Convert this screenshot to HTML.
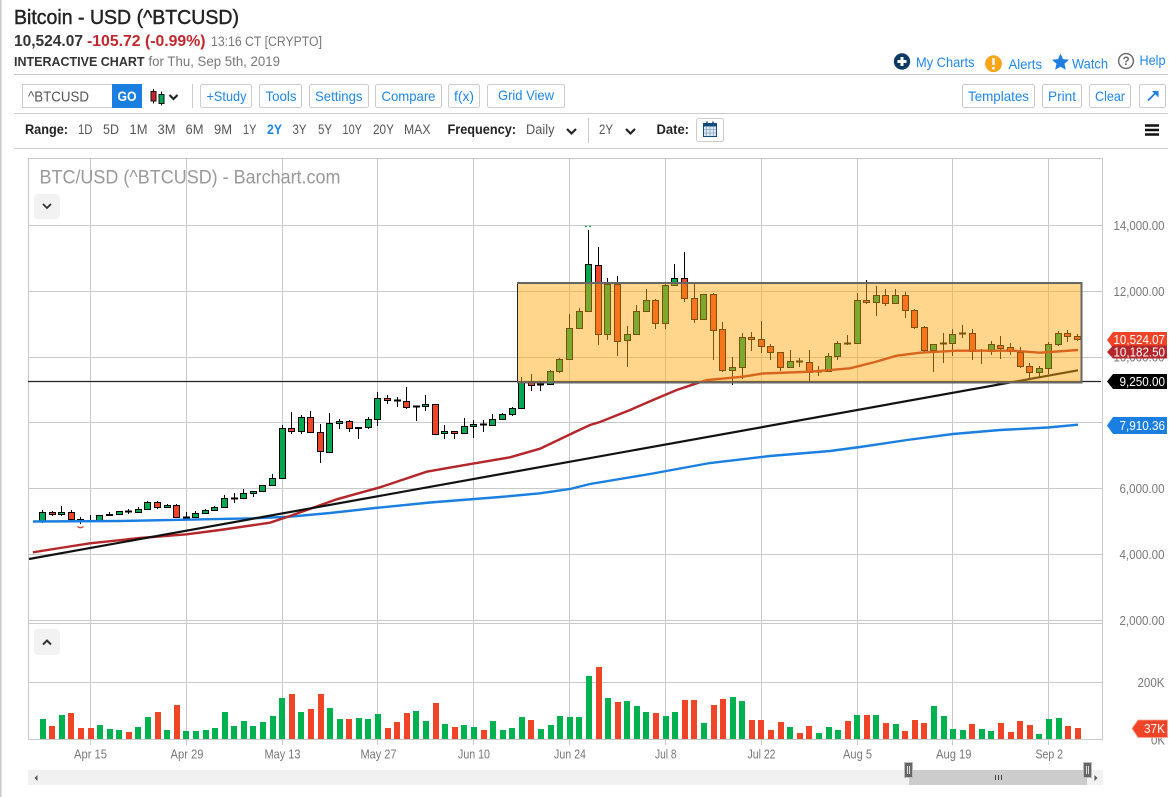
<!DOCTYPE html>
<html lang="en"><head><meta charset="utf-8"><title>Bitcoin - USD (^BTCUSD)</title>
<style>
html,body{margin:0;padding:0;background:#fff;width:1175px;height:797px;overflow:hidden}
svg{display:block}
text{font-family:"Liberation Sans",sans-serif;white-space:pre}
.b{fill:#1f86e6;font-size:14px}
.r{fill:#555;font-size:13.5px}
.rb{fill:#222;font-size:13.5px;font-weight:bold}
.a{fill:#777;font-size:13px}
.x{fill:#777;font-size:13px}
.t{fill:#fff;font-size:13px}
.btn{fill:#fff;stroke:#ccc;stroke-width:1}
</style></head><body>
<svg width="1175" height="797" viewBox="0 0 1175 797" xmlns="http://www.w3.org/2000/svg">
<rect width="1175" height="797" fill="#fff"/>
<path d="M.5 0V797" stroke="#c8c8c8" stroke-width="2"/>
<!-- header -->
<text x="14" y="24" font-size="20.500" fill="#222" stroke="#222" stroke-width=".45" textLength="225" lengthAdjust="spacingAndGlyphs">Bitcoin - USD (^BTCUSD)</text>
<text x="14" y="46" font-size="15.500" font-weight="bold" fill="#333" textLength="69" lengthAdjust="spacingAndGlyphs">10,524.07</text>
<text x="87" y="46" font-size="15.500" font-weight="bold" fill="#c1272d" textLength="118.500" lengthAdjust="spacingAndGlyphs">-105.72 (-0.99%)</text>
<text x="211" y="46" font-size="13.500" fill="#777" textLength="111" lengthAdjust="spacingAndGlyphs">13:16 CT [CRYPTO]</text>
<text x="14" y="66" font-size="13" font-weight="bold" fill="#333" textLength="130.500" lengthAdjust="spacingAndGlyphs">INTERACTIVE CHART</text>
<text x="148.500" y="66" font-size="14" fill="#777" textLength="131.500" lengthAdjust="spacingAndGlyphs">for Thu, Sep 5th, 2019</text>
<!-- top links -->
<circle cx="902" cy="61.500" r="8.200" fill="#0d3a63"/><path d="M902 57v9M897.500 61.500h9" stroke="#fff" stroke-width="3"/>
<text x="916" y="67" class="b" textLength="58.500" lengthAdjust="spacingAndGlyphs">My Charts</text>
<circle cx="993.500" cy="63.700" r="8.400" fill="#f9a51a"/><path d="M993.500 58v7" stroke="#fff" stroke-width="2.400"/><circle cx="993.500" cy="68.200" r="1.400" fill="#fff"/>
<text x="1008.500" y="69" class="b" textLength="33.500" lengthAdjust="spacingAndGlyphs">Alerts</text>
<polygon fill="#1f7fe0" points="1060.5,53.5 1062.97,59.1 1069.06,59.72 1064.5,63.8 1065.8,69.78 1060.5,66.7 1055.2,69.78 1056.5,63.8 1051.94,59.72 1058.03,59.1"/>
<text x="1072" y="68.500" class="b" textLength="36" lengthAdjust="spacingAndGlyphs">Watch</text>
<circle cx="1126" cy="61" r="7.400" fill="none" stroke="#666" stroke-width="1.400"/><text x="1122.600" y="65.200" font-size="11.500" font-weight="bold" fill="#666">?</text>
<text x="1139.500" y="65" class="b" textLength="26" lengthAdjust="spacingAndGlyphs">Help</text>
<path d="M14 74.500H1168M14 113.500H1168M14 148.500H1168" stroke="#ccc" stroke-width="1"/>
<!-- toolbar -->
<rect class="btn" x="22.500" y="84.500" width="90" height="23"/>
<text x="28" y="101.500" font-size="15" fill="#555" textLength="61" lengthAdjust="spacingAndGlyphs">^BTCUSD</text>
<rect x="112" y="84" width="30" height="24" fill="#1a7fe0"/>
<text x="117.500" y="101" font-size="13.500" font-weight="bold" fill="#fff" textLength="19" lengthAdjust="spacingAndGlyphs">GO</text>
<path d="M153.500 89v14.500M161.500 91.500V105.500" stroke="#111" stroke-width="1"/>
<rect x="151" y="91.500" width="5" height="9.500" fill="#c1272d" stroke="#111"/>
<rect x="159" y="94.500" width="5" height="9" fill="#00a651" stroke="#111"/>
<path d="M169.500 95l4 4 4-4" fill="none" stroke="#222" stroke-width="2.200"/>
<path d="M192.500 84V108" stroke="#ccc"/>
<rect class="btn" x="200.500" y="84.500" width="51" height="23" rx="2"/><text x="206.500" y="101" class="b" textLength="40" lengthAdjust="spacingAndGlyphs">+Study</text>
<rect class="btn" x="259.500" y="84.500" width="42" height="23" rx="2"/><text x="265.500" y="101" class="b" textLength="31" lengthAdjust="spacingAndGlyphs">Tools</text>
<rect class="btn" x="309.500" y="84.500" width="59" height="23" rx="2"/><text x="315" y="101" class="b" textLength="47.500" lengthAdjust="spacingAndGlyphs">Settings</text>
<rect class="btn" x="375.500" y="84.500" width="66" height="23" rx="2"/><text x="381.500" y="101" class="b" textLength="54" lengthAdjust="spacingAndGlyphs">Compare</text>
<rect class="btn" x="448.500" y="84.500" width="31" height="23" rx="2"/><text x="454" y="101" class="b" textLength="20" lengthAdjust="spacingAndGlyphs">f(x)</text>
<rect class="btn" x="487.500" y="84.500" width="77" height="23" rx="2"/><text x="498" y="100" class="b" textLength="56" lengthAdjust="spacingAndGlyphs">Grid View</text>
<rect class="btn" x="962.500" y="84.500" width="72" height="23" rx="2"/><text x="968" y="101" class="b" textLength="61" lengthAdjust="spacingAndGlyphs">Templates</text>
<rect class="btn" x="1042.500" y="84.500" width="39" height="23" rx="2"/><text x="1048" y="101" class="b" textLength="28" lengthAdjust="spacingAndGlyphs">Print</text>
<rect class="btn" x="1089.500" y="84.500" width="41" height="23" rx="2"/><text x="1095" y="101" class="b" textLength="30" lengthAdjust="spacingAndGlyphs">Clear</text>
<rect class="btn" x="1139.500" y="84.500" width="26" height="23" rx="2"/>
<path d="M1148 100.500l8-8" stroke="#1f7fe0" stroke-width="1.800"/><path d="M1152 91h6.500v6.500z" fill="#1f7fe0"/>
<!-- range row -->
<text x="25" y="134" class="rb" textLength="43" lengthAdjust="spacingAndGlyphs">Range:</text>
<text x="78" y="134" class="r" textLength="14.500" lengthAdjust="spacingAndGlyphs">1D</text>
<text x="103" y="134" class="r" textLength="16" lengthAdjust="spacingAndGlyphs">5D</text>
<text x="129.500" y="134" class="r" textLength="18" lengthAdjust="spacingAndGlyphs">1M</text>
<text x="157.500" y="134" class="r" textLength="18" lengthAdjust="spacingAndGlyphs">3M</text>
<text x="185.500" y="134" class="r" textLength="18" lengthAdjust="spacingAndGlyphs">6M</text>
<text x="214" y="134" class="r" textLength="18" lengthAdjust="spacingAndGlyphs">9M</text>
<text x="243" y="134" class="r" textLength="13.500" lengthAdjust="spacingAndGlyphs">1Y</text>
<text x="267" y="134" font-size="13.500" font-weight="bold" fill="#1f86e6" textLength="15" lengthAdjust="spacingAndGlyphs">2Y</text>
<text x="292.500" y="134" class="r" textLength="14" lengthAdjust="spacingAndGlyphs">3Y</text>
<text x="318" y="134" class="r" textLength="14" lengthAdjust="spacingAndGlyphs">5Y</text>
<text x="342.500" y="134" class="r" textLength="19.500" lengthAdjust="spacingAndGlyphs">10Y</text>
<text x="373" y="134" class="r" textLength="21" lengthAdjust="spacingAndGlyphs">20Y</text>
<text x="404" y="134" class="r" textLength="26.500" lengthAdjust="spacingAndGlyphs">MAX</text>
<text x="447.500" y="134" class="rb" textLength="68.500" lengthAdjust="spacingAndGlyphs">Frequency:</text>
<text x="526" y="134" class="r" textLength="28.500" lengthAdjust="spacingAndGlyphs">Daily</text>
<path d="M567 129l4.500 4.500 4.500-4.500" fill="none" stroke="#222" stroke-width="2.200"/>
<path d="M588.500 118V143" stroke="#ccc"/>
<text x="599" y="134" class="r" textLength="14" lengthAdjust="spacingAndGlyphs">2Y</text>
<path d="M626 129l4.500 4.500 4.500-4.500" fill="none" stroke="#222" stroke-width="2.200"/>
<text x="656.500" y="134" class="rb" textLength="32.500" lengthAdjust="spacingAndGlyphs">Date:</text>
<rect class="btn" x="696.500" y="118.500" width="27" height="23" rx="2"/>
<rect x="703.500" y="123.500" width="13" height="13" fill="#dfe9f3" stroke="#124a7c"/>
<rect x="703" y="123" width="14" height="3.500" fill="#124a7c"/>
<path d="M707 121.500v3M713 121.500v3" stroke="#124a7c" stroke-width="1.500"/>
<path d="M706.500 127v9M710 127v9M713.500 127v9M704 129.500h12M704 133h12" stroke="#90a9c2" stroke-width=".8"/>
<path d="M1145 125.500H1159M1145 130H1159M1145 134.500H1159" stroke="#111" stroke-width="2.400"/>
<!-- grid -->
<g stroke="#c9c9c9" stroke-width="1" fill="none">
<path d="M28.500 158.500H1102.500V739.500H28.500Z"/>
<path d="M28.500 620.500H1102.500M28.500 623.500H1102.500M28.500 682.500H1102.500"/>
<path d="M28.500 225.500H1102.500M28.500 291.500H1102.500M28.500 357.500H1102.500M28.500 422.500H1102.500M28.500 488.500H1102.500M28.500 554.500H1102.500"/>
<path d="M90.500 158V745M186.500 158V745M282.500 158V745M377.500 158V745M473.500 158V745M569.500 158V745M665.500 158V745M761.500 158V745M857.500 158V745M952.500 158V745M1048.500 158V745"/>
</g>
<text x="39.500" y="183.500" font-size="19" fill="#999" textLength="301" lengthAdjust="spacingAndGlyphs">BTC/USD (^BTCUSD) - Barchart.com</text>
<rect x="34" y="194" width="26" height="25" rx="4" fill="#f2f2f2"/><path d="M43 204l4 4 4-4" fill="none" stroke="#333" stroke-width="1.800"/>
<rect x="34" y="629" width="26" height="26" rx="4" fill="#f2f2f2"/><path d="M43 644.500l4-4 4 4" fill="none" stroke="#333" stroke-width="2"/>
<!-- 9250 level -->
<path d="M28 381.500H1101" stroke="#222" stroke-width="1.200"/>
<!-- candle wicks -->
<path fill="none" stroke="#000" stroke-width="1" d="M42.500 510V523M52.500 511V516M61.500 506V516M71.500 510V522M80.500 517V524M90.500 515V522M99.500 515V521M109.500 512V516M119.500 511V515M128.500 509V514M138.500 507V513M147.500 501V510M157.500 501V509M167.500 504V508M176.500 504V518M186.500 512V518M195.500 511V518M205.500 509V514M214.500 506V511M224.500 495V508M234.500 493V503M243.500 489V499M253.500 491V497M262.500 485V492M272.500 474V486M282.500 425V479M291.500 412V434M301.500 415V434M310.500 411V433M320.500 424V463M329.500 413V453M339.500 419V429M349.500 420V432M358.500 428V439M368.500 417V429M377.500 392V426M387.500 395V404M397.500 397V407M406.500 387V409M416.500 406V421M425.500 395V411M435.500 404V435M444.500 425V439M454.500 431V439M464.500 418V434M473.500 420V438M483.500 420V432M492.500 414V426M502.500 413V420M512.500 407V416M521.500 377V409M531.500 374V391M540.500 381V391M550.500 370V385M559.500 358V373M569.500 314V360M579.500 308V329M588.500 230V312M598.500 247V345M607.500 278V340M617.500 276V356M627.500 326V367M636.500 305V335M646.500 289V312M655.500 299V329M665.500 282V329M674.500 264V286M684.500 252V302M694.500 284V323M703.500 294V320M713.500 293V360M722.500 322V372M732.500 357V385M742.500 333V379M751.500 332V351M761.500 321V353M770.500 344V360M780.500 352V371M790.500 350V368M799.500 358V367M809.500 350V383M818.500 366V376M828.500 353V372M837.500 341V360M847.500 335V345M857.500 293V344M866.500 280V304M876.500 286V316M885.500 289V306M895.500 289V304M905.500 292V318M914.500 309V329M924.500 326V353M933.500 344V372M943.500 333V363M952.500 329V356M962.500 325V338M972.500 329V360M981.500 349V364M991.500 341V355M1000.500 336V359M1010.500 343V355M1020.500 347V368M1029.500 363V378M1039.500 366V377M1048.500 342V374M1058.500 331V346M1067.500 330V342M1077.500 334V341"/>
<!-- doji -->
<path fill="none" stroke="#000" stroke-width="2" d="M77 520h7M87 521h7M106 515h7M125 511.500h7M183 517.500h7M231 498.500h7M355 428h7M394 400.500h7M413 406.500h7M480 424.500h7M537 384.500h7M796 361.500h7M815 371.500h7M844 343.500h7M940 343.500h7M959 333.500h7M978 350.500h7"/>
<!-- green bodies -->
<path fill="#00a94f" stroke="#000" stroke-width="1" d="M39.500 512.500h6v9h-6zM58.500 512.500h6v2h-6zM96.500 515.500h6v5h-6zM116.500 511.500h6v3h-6zM135.500 509.500h6v3h-6zM144.500 502.500h6v7h-6zM164.500 505.500h6v2h-6zM192.500 513.500h6v4h-6zM202.500 510.500h6v3h-6zM211.500 507.500h6v3h-6zM221.500 498.500h6v9h-6zM240.500 493.500h6v5h-6zM250.500 491.500h6v2h-6zM259.500 485.500h6v6h-6zM269.500 478.500h6v7h-6zM279.500 428.500h6v50h-6zM298.500 417.500h6v14h-6zM326.500 423.500h6v29h-6zM336.500 421.500h6v2h-6zM365.500 419.500h6v8h-6zM374.500 398.500h6v21h-6zM422.500 404.500h6v2h-6zM441.500 431.500h6v2h-6zM461.500 426.500h6v7h-6zM470.500 424.500h6v2h-6zM489.500 419.500h6v6h-6zM499.500 414.500h6v5h-6zM509.500 408.500h6v6h-6zM518.500 382.500h6v26h-6zM547.500 371.500h6v13h-6zM556.500 359.500h6v12h-6zM566.500 328.500h6v31h-6zM576.500 311.500h6v17h-6zM585.500 264.500h6v47h-6zM604.500 284.500h6v50h-6zM624.500 334.500h6v6h-6zM633.500 311.500h6v23h-6zM643.500 300.500h6v11h-6zM662.500 285.500h6v38h-6zM671.500 278.500h6v7h-6zM700.500 294.500h6v25h-6zM729.500 367.500h6v3h-6zM739.500 337.500h6v30h-6zM787.500 361.500h6v6h-6zM825.500 356.500h6v15h-6zM834.500 343.500h6v13h-6zM854.500 300.500h6v43h-6zM873.500 295.500h6v7h-6zM892.500 295.500h6v8h-6zM930.500 344.500h6v6h-6zM949.500 334.500h6v9h-6zM988.500 344.500h6v7h-6zM1036.500 368.500h6v4h-6zM1045.500 344.500h6v24h-6zM1055.500 333.500h6v11h-6z"/>
<!-- red bodies -->
<path fill="#f04428" stroke="#000" stroke-width="1" d="M49.500 512.500h6v2h-6zM68.500 512.500h6v7h-6zM154.500 502.500h6v5h-6zM173.500 505.500h6v12h-6zM288.500 428.500h6v3h-6zM307.500 417.500h6v15h-6zM317.500 432.500h6v19h-6zM346.500 421.500h6v7h-6zM384.500 398.500h6v2h-6zM403.500 401.500h6v6h-6zM432.500 404.500h6v30h-6zM451.500 431.500h6v2h-6zM528.500 381.500h6v4h-6zM595.500 265.500h6v69h-6zM614.500 284.500h6v57h-6zM652.500 300.500h6v23h-6zM681.500 278.500h6v20h-6zM691.500 298.500h6v21h-6zM710.500 294.500h6v36h-6zM719.500 329.500h6v41h-6zM748.500 337.500h6v2h-6zM758.500 339.500h6v7h-6zM767.500 346.500h6v6h-6zM777.500 352.500h6v15h-6zM806.500 362.500h6v10h-6zM863.500 300.500h6v2h-6zM882.500 295.500h6v8h-6zM902.500 295.500h6v15h-6zM911.500 310.500h6v17h-6zM921.500 327.500h6v23h-6zM969.500 333.500h6v18h-6zM997.500 345.500h6v3h-6zM1007.500 347.500h6v4h-6zM1017.500 352.500h6v14h-6zM1026.500 366.500h6v6h-6zM1064.500 333.500h6v3h-6zM1074.500 336.500h6v3h-6z"/>
<!-- markers -->
<path d="M585 226.500h2M589 226.500h2" stroke="#00a94f" stroke-width="1.200"/>
<path d="M77.500 526.500q3 2.500 6 0" fill="none" stroke="#f04428" stroke-width="1.300"/>
<!-- moving averages & trendline -->
<polyline fill="none" stroke="#1a7fe0" stroke-width="2.400" points="33,521.500 120,521 186.700,519.700 253,518.300 290,516.700 330,513 375,508 430,502.500 500,497 540,493.300 570,489 590,484 650,474 710,463 770,456 830,451 860,447 907,440 953,434 1000,430 1048,427.500 1078,424.700"/>
<polyline fill="none" stroke="#b5262b" stroke-width="2.400" points="33,552.300 60,548 90,543.300 140,538 186.700,534.300 220,530 270,522.700 290,516 336.700,499.300 380,487.300 426.700,471.700 466.700,464.700 510,457.300 540,448.700 575,432 590,425 600,422 630,410 653,400 676.700,390 696.700,383.300 706.700,380 743,376.700 763,373.500 810,371.700 850,368.300 875,362 896.700,355.700 920,352.700 956.700,350.700 1013,350.700 1040,352.700 1078,350"/>
<path d="M29 559L1078 370.300" stroke="#111" stroke-width="2.200" fill="none"/>
<!-- rectangle overlay -->
<rect x="517.500" y="283" width="564" height="99" fill="rgba(255,169,15,.478)"/>
<path d="M517.500 282.500V382.500" stroke="#222" stroke-width="1" fill="none"/>
<path d="M517 283H1081.500V382.500H517" stroke="#666" stroke-width="2" fill="none"/>
<!-- axis labels -->
<text x="1113.500" y="230" class="a" textLength="51" lengthAdjust="spacingAndGlyphs">14,000.00</text>
<text x="1113.500" y="296" class="a" textLength="51" lengthAdjust="spacingAndGlyphs">12,000.00</text>
<text x="1113.500" y="361.500" class="a" textLength="51" lengthAdjust="spacingAndGlyphs">10,000.00</text>
<text x="1119.500" y="493" class="a" textLength="45" lengthAdjust="spacingAndGlyphs">6,000.00</text>
<text x="1119.500" y="559" class="a" textLength="45" lengthAdjust="spacingAndGlyphs">4,000.00</text>
<text x="1119.500" y="625" class="a" textLength="45" lengthAdjust="spacingAndGlyphs">2,000.00</text>
<text x="1137.500" y="687" class="a" textLength="27" lengthAdjust="spacingAndGlyphs">200K</text>
<text x="1151" y="744.500" class="a" textLength="14" lengthAdjust="spacingAndGlyphs">0K</text>
<!-- tags -->
<path d="M1107 340L1113 332H1167V348H1113Z" fill="#f04428"/>
<text x="1113.500" y="344" class="t" textLength="51.500" lengthAdjust="spacingAndGlyphs">10,524.07</text>
<path d="M1107 352L1113 345.500H1167V358.500H1113Z" fill="#b5262b"/>
<text x="1113.500" y="356.500" class="t" textLength="51.500" lengthAdjust="spacingAndGlyphs">10,182.50</text>
<path d="M1107 381.500L1113 374H1167V389H1113Z" fill="#000"/>
<text x="1119.500" y="386" class="t" textLength="45.500" lengthAdjust="spacingAndGlyphs">9,250.00</text>
<path d="M1107 425.500L1113 417H1167V434H1113Z" fill="#1a7fe0"/>
<text x="1119.500" y="430" class="t" textLength="45.500" lengthAdjust="spacingAndGlyphs">7,910.36</text>
<!-- volume -->
<path fill="none" stroke="#00b14f" stroke-width="6" d="M43 739v-20M62 739v-24M100 739v-14M110 739v-10M119 739v-9M138 739v-12M148 739v-22M167 739v-9M186 739v-8M196 739v-8M206 739v-9M215 739v-11M225 739v-27M234 739v-13M244 739v-18M253 739v-13M263 739v-17M273 739v-23M282 739v-41M301 739v-27M330 739v-31M340 739v-20M359 739v-21M368 739v-20M378 739v-25M416 739v-28M426 739v-18M445 739v-15M464 739v-14M474 739v-12M493 739v-18M503 739v-9M512 739v-11M522 739v-22M541 739v-10M551 739v-14M560 739v-23M570 739v-22M579 739v-22M589 739v-63M608 739v-41M627 739v-38M637 739v-33M646 739v-27M666 739v-23M675 739v-27M704 739v-16M733 739v-42M742 739v-38M790 739v-12M819 739v-6M829 739v-12M838 739v-9M857 739v-24M876 739v-24M896 739v-15M934 739v-33M944 739v-23M953 739v-10M963 739v-9M982 739v-10M991 739v-8M1039 739v-5M1049 739v-20M1059 739v-21"/>
<path fill="none" stroke="#f04428" stroke-width="6" d="M52 739v-13M71 739v-26M81 739v-11M91 739v-11M129 739v-7M158 739v-27M177 739v-34M292 739v-45M311 739v-30M321 739v-45M349 739v-20M388 739v-11M397 739v-17M407 739v-26M436 739v-36M455 739v-12M484 739v-9M531 739v-19M599 739v-72M618 739v-37M656 739v-26M685 739v-39M694 739v-39M714 739v-34M723 739v-40M752 739v-19M761 739v-19M771 739v-9M781 739v-17M800 739v-6M809 739v-13M848 739v-18M867 739v-24M886 739v-16M905 739v-8M915 739v-19M924 739v-16M972 739v-15M1001 739v-16M1011 739v-7M1020 739v-18M1030 739v-14M1068 739v-13M1078 739v-11"/>
<path d="M1132 728.500L1138 720H1167.500V737.500H1138Z" fill="#f04428" stroke="#f6a090" stroke-width=".8"/>
<text x="1144" y="733" class="t" textLength="21" lengthAdjust="spacingAndGlyphs">37K</text>
<!-- x labels -->
<text x="74" y="758.500" class="x" textLength="33" lengthAdjust="spacingAndGlyphs">Apr 15</text>
<text x="170.500" y="758.500" class="x" textLength="33" lengthAdjust="spacingAndGlyphs">Apr 29</text>
<text x="264.500" y="758.500" class="x" textLength="36" lengthAdjust="spacingAndGlyphs">May 13</text>
<text x="360.500" y="758.500" class="x" textLength="36" lengthAdjust="spacingAndGlyphs">May 27</text>
<text x="458" y="758.500" class="x" textLength="32" lengthAdjust="spacingAndGlyphs">Jun 10</text>
<text x="554" y="758.500" class="x" textLength="32" lengthAdjust="spacingAndGlyphs">Jun 24</text>
<text x="655" y="758.500" class="x" textLength="21.500" lengthAdjust="spacingAndGlyphs">Jul 8</text>
<text x="747.500" y="758.500" class="x" textLength="28" lengthAdjust="spacingAndGlyphs">Jul 22</text>
<text x="843" y="758.500" class="x" textLength="29" lengthAdjust="spacingAndGlyphs">Aug 5</text>
<text x="936" y="758.500" class="x" textLength="35.500" lengthAdjust="spacingAndGlyphs">Aug 19</text>
<text x="1035.500" y="758.500" class="x" textLength="27.500" lengthAdjust="spacingAndGlyphs">Sep 2</text>
<!-- scrollbar -->
<rect x="28" y="770" width="1075" height="15" fill="#f1f1f1"/>
<path d="M37.500 775v6l-3-3z" fill="#555"/>
<path d="M1094.500 775v6l3-3z" fill="#555"/>
<rect x="909" y="770" width="178" height="15" fill="#cccccc"/>
<path d="M995.500 775V780M998.500 775V780M1001.500 775V780" stroke="#444" stroke-width="1"/>
<rect x="904.500" y="762.500" width="8" height="15" fill="#666" stroke="#bbb"/>
<path d="M907.500 766V774M909.500 766V774" stroke="#ddd"/>
<rect x="1083.500" y="762.500" width="8" height="15" fill="#666" stroke="#bbb"/>
<path d="M1086.500 766V774M1088.500 766V774" stroke="#ddd"/>
</svg>
</body></html>
